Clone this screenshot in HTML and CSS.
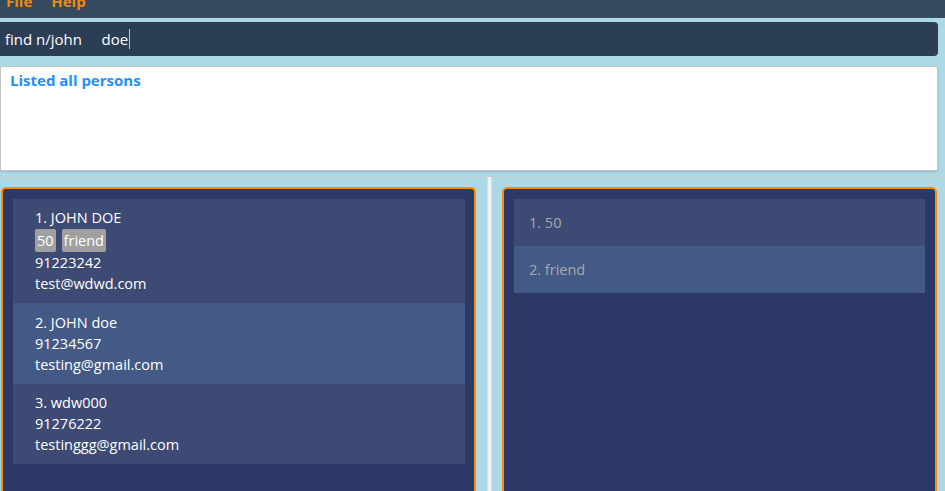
FILE: index.html
```html
<!DOCTYPE html>
<html>
<head>
<meta charset="utf-8">
<link rel="stylesheet" href="styles.css">
</head>
<body>
<div class="app">
  <div class="menubar">
    <span class="menu-item">File</span>
    <span class="menu-item">Help</span>
  </div>
  <div class="command-wrap">
    <div class="command-box"><span class="cmd-text">find n/john&nbsp;&nbsp;&nbsp;&nbsp;&nbsp;doe</span><span class="caret"></span></div>
  </div>
  <div class="result-wrap">
    <div class="result-box">Listed all persons</div>
  </div>
  <div class="split">
    <div class="pane pane-left">
      <div class="panel">
        <div class="list">
          <div class="cell odd">
            <div class="line">1. JOHN DOE</div>
            <div class="tags"><span class="tag">50</span><span class="tag">friend</span></div>
            <div class="line">91223242</div>
            <div class="line">test@wdwd.com</div>
          </div>
          <div class="cell even">
            <div class="line">2. JOHN doe</div>
            <div class="line">91234567</div>
            <div class="line">testing@gmail.com</div>
          </div>
          <div class="cell odd">
            <div class="line">3. wdw000</div>
            <div class="line">91276222</div>
            <div class="line">testinggg@gmail.com</div>
          </div>
        </div>
      </div>
    </div>
    <div class="divider"></div>
    <div class="pane pane-right">
      <div class="panel panel-r">
        <div class="list list-r">
          <div class="tcell odd">1. 50</div>
          <div class="tcell even">2. friend</div>
        </div>
      </div>
    </div>
  </div>
</div>
</body>
</html>
```

FILE: styles.css
```css
* { box-sizing: border-box; }
html, body {
  margin: 0;
  padding: 0;
  width: 945px;
  height: 491px;
  overflow: hidden;
  background: #add8e6;
  font-family: "Open Sans", "Noto Sans", sans-serif;
}
.app {
  display: flex;
  flex-direction: column;
  height: 491px;
}
.menubar {
  height: 18px;
  background: #34495e;
  display: flex;
  gap: 19px;
  padding-left: 6px;
  overflow: hidden;
  border-bottom: 1px solid #3d5166;
}
.menu-item {
  color: #ef8a10;
  font-weight: bold;
  font-size: 15px;
  line-height: 15px;
  margin-top: -6px;
}
.command-wrap {
  padding: 4px 7px 0 0;
}
.command-box {
  height: 34px;
  background: #2c3e55;
  border-radius: 0 4px 4px 0;
  display: flex;
  align-items: center;
  padding-left: 5px;
  color: #fff;
  font-size: 15px;
}
.caret {
  display: inline-block;
  width: 1px;
  height: 20px;
  background: #c8c8d0;
  margin-left: 1px;
}
.result-wrap {
  padding: 10px 7px 0 0;
}
.result-box {
  height: 105px;
  background: #fff;
  border: 1px solid #c4c4c4;
  border-radius: 2px;
  box-shadow: 0 1px 2px rgba(0,0,0,0.15);
  color: #1e90ff;
  font-weight: bold;
  font-size: 15px;
  padding: 3px 9px;
}
.split {
  margin-top: 5px;
  border-top: 1px solid #c6cdd2;
  flex: 1;
  display: flex;
  min-height: 0;
}
.pane {
  padding-top: 10px;
  display: flex;
}
.pane-left {
  width: 487px;
  padding-left: 1px;
  padding-right: 11px;
}
.pane-right {
  flex: 1;
  padding-left: 10px;
  padding-right: 8px;
}
.divider {
  width: 5px;
  background: #f2f2f2;
  border-left: 1px solid #dcdcdc;
  border-right: 1px solid #dcdcdc;
}
.panel {
  flex: 1;
  background: #2c3966;
  border: 2px solid #ff8c00;
  border-bottom: none;
  border-radius: 5px 5px 0 0;
  padding: 10px 9px 0 10px;
}
.panel-r {
  padding: 10px 10px 0 10px;
}
.cell {
  padding: 8px 22px 9px;
  color: #fff;
  font-size: 14.5px;
  line-height: 21px;
}
.cell.even {
  padding-top: 9px;
  padding-bottom: 9px;
}
.odd { background: #3c4a74; }
.even { background: #435a86; }
.tags {
  display: flex;
  gap: 6px;
  margin: 1px 0 0;
}
.tag {
  background: #a0a0a0;
  color: #fff;
  border-radius: 2px;
  padding: 0 2px;
  line-height: 23px;
  height: 23px;
}
.tcell {
  height: 47px;
  display: flex;
  align-items: center;
  padding-left: 15px;
  color: #a8a8a8;
  font-size: 14.5px;
}
```
